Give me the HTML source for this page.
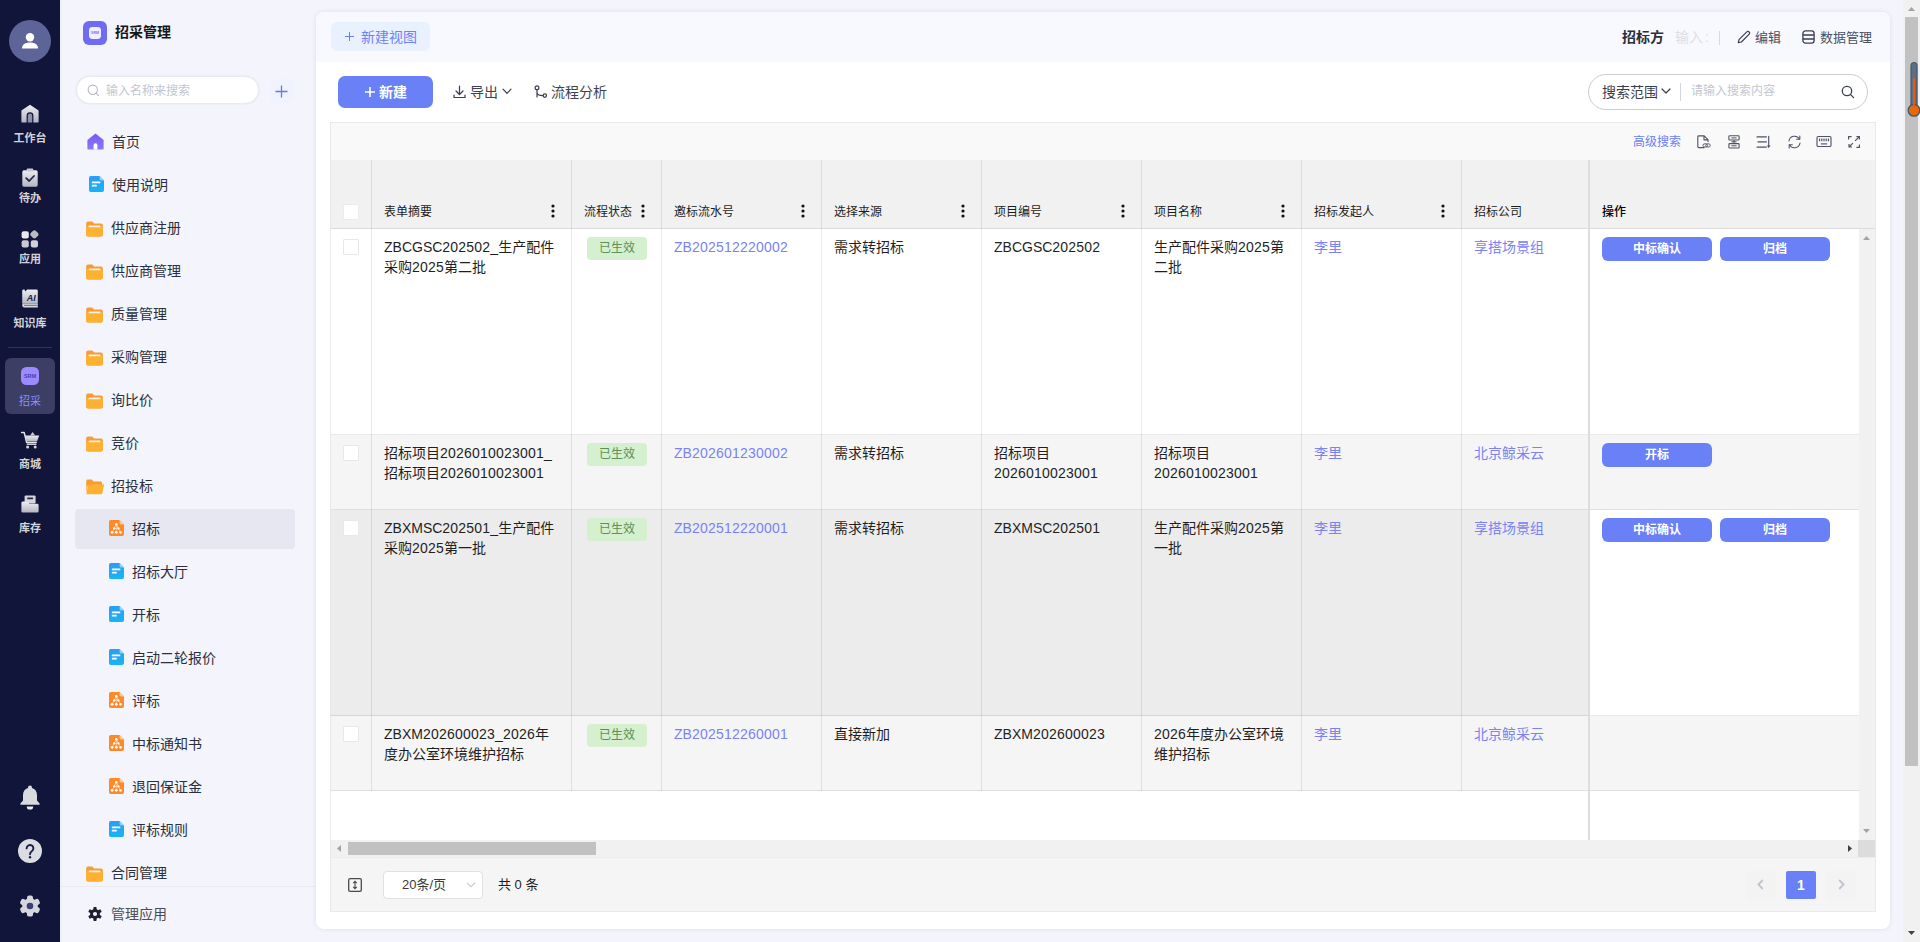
<!DOCTYPE html>
<html lang="zh-CN">
<head>
<meta charset="utf-8">
<title>招采管理</title>
<style>
*{box-sizing:border-box;margin:0;padding:0}
html,body{width:1920px;height:942px;overflow:hidden}
body{font-family:"Liberation Sans","Noto Sans CJK SC",sans-serif;font-size:14px;color:#1f2329;background:#f3f4fc;position:relative}
.abs{position:absolute}
/* ---------- left dark nav ---------- */
#nav{position:absolute;left:0;top:0;width:60px;height:942px;background:#11153a}
#nav .avatar{position:absolute;left:9px;top:20px;width:42px;height:42px;border-radius:50%;background:#5d6497}
#nav .it{position:absolute;left:0;width:60px;text-align:center;color:#dcdce2;font-size:11px;font-weight:bold;line-height:14px}
#nav .it svg{position:absolute;left:21px}
#nav .lab{position:absolute;left:0;width:60px;text-align:center;color:#d3d3da;font-size:11px;font-weight:bold;line-height:14px;letter-spacing:0}
#nav .sel{position:absolute;left:5px;top:358px;width:50px;height:56px;border-radius:6px;background:#3c3f63}
#nav .div{position:absolute;left:8px;top:347px;width:44px;height:1px;background:#303459}
/* ---------- sidebar ---------- */
#side{position:absolute;left:60px;top:0;width:256px;height:942px;background:#f3f4fc}
#side .logo{position:absolute;left:23px;top:21px;width:24px;height:24px;border-radius:6px;background:#6f6cf3}
#side .title{position:absolute;left:55px;top:22px;font-size:14px;font-weight:bold;line-height:20px;color:#14161a}
#side .search{position:absolute;left:16px;top:76px;width:183px;height:28px;border-radius:15px;background:#fff;border:1px solid #e9eaf2;box-shadow:0 0 2px rgba(90,100,160,.12)}
#side .search span{position:absolute;left:29px;top:6px;font-size:12px;line-height:16px;color:#c3c6cf}
#side .plus{position:absolute;left:210px;top:79px;width:24px;height:24px;border-radius:6px;background:#f0f2fe}
.mi{position:absolute;left:0;width:256px;height:40px;font-size:14px;line-height:20px;color:#2b2f3b}
.mi span{position:absolute;top:10px}
.mi svg{position:absolute}
.mi.sel{left:15px;width:220px;background:#e6e7f0;border-radius:4px}
/* ---------- card ---------- */
#card{position:absolute;left:316px;top:12px;width:1574px;height:917px;background:#fff;border-radius:8px;box-shadow:0 0 5px rgba(40,50,90,.10)}
#tabs{position:absolute;left:0;top:0;width:1574px;height:50px;background:#f8f9fe;border-radius:8px 8px 0 0}

/* ---------- main ---------- */
#main{position:absolute;left:0;top:0;width:1920px;height:942px;pointer-events:none}
#main *{position:absolute}
.t{white-space:nowrap}
.btnnew{left:338px;top:76px;width:95px;height:32px;border-radius:7px;background:#6980f7}
.tb{font-size:14px;line-height:20px;color:#3d4252;top:82px}
#tbl{left:330px;top:122px;width:1546px;height:790px;background:#fff;border:1px solid #e9e9eb}
.hd{top:160px;height:69px;background:#f1f1f1;border-bottom:1px solid rgba(0,0,0,.085)}
.ht{font-size:12px;line-height:16px;color:#1d1d1d;top:204px}
.vl{width:1px;background:rgba(0,0,0,.085)}
.row{left:331px;width:1258px}
.cell{font-size:14px;line-height:20px;color:#1f1f1f}
.lk{color:#7983f5}
#main .d{position:static;letter-spacing:.214px}
.tag{width:60px;height:23px;border-radius:4px;background:#d4f0cf;color:#5d8f58;font-size:12px;line-height:23px;text-align:center}
.ob{height:24px;width:110px;border-radius:6px;background:#6980f7;color:#fff;font-size:12px;font-weight:bold;line-height:24px;text-align:center}
.cb{width:16px;height:16px;background:#fff;border:1px solid #e8e8e8;border-radius:1px}
.dots{width:4px;height:14px}
</style>
</head>
<body>
<div id="nav">
<div class="avatar"><svg class="abs" style="left:12px;top:12px" width="18" height="18" viewBox="0 0 18 18"><circle cx="9" cy="5.2" r="4.2" fill="#fff"/><path d="M1 16.6c0-4 3.2-6 8-6s8 2 8 6z" fill="#fff"/></svg></div>
<svg class="abs" style="left:21px;top:104px" width="18" height="19" viewBox="0 0 18 19"><defs><linearGradient id="g1" x1="0" y1="0" x2="0" y2="1"><stop offset="0" stop-color="#ededf2"/><stop offset="1" stop-color="#b4b5c2"/></linearGradient></defs><path d="M9 .8 17.6 6.6V17.4a1.2 1.2 0 0 1-1.2 1.2H12.4V11.6a3.4 3.4 0 0 0-6.8 0v7H1.6A1.2 1.2 0 0 1 .4 17.4V6.600z" fill="url(#g1)"/><path d="M6.800 18.600V11.800a2.200 2.200 0 0 1 4.400 0v6.800z" fill="#8f91a8"/></svg>
<div class="lab" style="top:131px">工作台</div>
<svg class="abs" style="left:22px;top:168px" width="16" height="19" viewBox="0 0 16 19"><rect x=".3" y="2.300" width="15.400" height="16.400" rx="1.600" fill="url(#g1)"/><rect x="4.800" y=".4" width="6.400" height="3.200" rx=".8" fill="#c9cad4"/><path d="M4.200 10.200 7.200 13 12 8" fill="none" stroke="#23264a" stroke-width="1.800" stroke-linecap="round" stroke-linejoin="round"/></svg>
<div class="lab" style="top:191px">待办</div>
<svg class="abs" style="left:21px;top:230px" width="18" height="18" viewBox="0 0 18 18"><rect x=".6" y="1.200" width="7.200" height="7.200" rx="2" fill="#e9e9ee"/><rect x="9.900" y=".9" width="7" height="7" rx="2.200" transform="rotate(45 13.400 4.400)" fill="#b9bac6"/><rect x=".6" y="10.200" width="7.200" height="7.200" rx="2" fill="#c9cad4"/><rect x="9.800" y="10.200" width="7.200" height="7.200" rx="2" fill="#cfd0d9"/></svg>
<div class="lab" style="top:252px">应用</div>
<svg class="abs" style="left:22px;top:289px" width="16" height="19" viewBox="0 0 16 19"><path d="M2.400.6 3.600 2.400 5 .6H14.400A1.400 1.400 0 0 1 15.800 2V14.800H.2V2A1.400 1.400 0 0 1 1.600.6z" fill="url(#g1)"/><path d="M.2 16.200A1.400 1.400 0 0 1 1.600 14.800H15.800V18.400H2.400A2.200 2.200 0 0 1 .2 16.200z" fill="#d9d9e0"/><rect x="2" y="15.800" width="13.800" height="1.200" fill="#7d7f99"/><text x="9.200" y="12.200" font-size="9" font-weight="bold" font-style="italic" text-anchor="middle" fill="#1c1f45" font-family="Liberation Sans, sans-serif">AI</text></svg>
<div class="lab" style="top:316px">知识库</div>
<div class="div"></div>
<div class="sel"></div>
<svg class="abs" style="left:21px;top:367px" width="18" height="18" viewBox="0 0 18 18"><rect width="18" height="18" rx="5.500" fill="#9b8bff"/><text x="9" y="11" font-size="5.500" font-weight="bold" text-anchor="middle" fill="#4a3fb0" font-family="Liberation Sans, sans-serif">SRM</text></svg>
<div class="lab" style="top:394px;color:#8f8bff;font-weight:normal;font-size:11px">招采</div>
<svg class="abs" style="left:21px;top:431px" width="19" height="18" viewBox="0 0 19 18"><path d="M.6 1.600H3.200L5.600 11.400H15.200" fill="none" stroke="#e4e4ea" stroke-width="1.500" stroke-linecap="round" stroke-linejoin="round"/><path d="M4.200 4.400H18.200L16 10.400H5.800z" fill="url(#g1)"/><path d="M9 4.400 11.600 1 14.200 4.400z" fill="#c9cad4"/><rect x="5.600" y="12.400" width="10" height="1.600" rx=".8" fill="#c9cad4"/><circle cx="6.600" cy="16" r="1.500" fill="#d6d6de"/><circle cx="14.200" cy="16" r="1.500" fill="#d6d6de"/></svg>
<div class="lab" style="top:457px">商城</div>
<svg class="abs" style="left:21px;top:495px" width="18" height="18" viewBox="0 0 18 18"><rect x="3.600" y=".4" width="11" height="8" rx="1.200" fill="#d4d5dd"/><rect x="6.200" y="2.600" width="6" height="1.600" rx=".6" fill="#23264a"/><path d="M.4 8A1.400 1.400 0 0 1 1.800 6.600H6.600L8.400 8.800H16.200A1.400 1.400 0 0 1 17.600 10.200V16.200A1.400 1.400 0 0 1 16.200 17.600H1.800A1.400 1.400 0 0 1 .4 16.200z" fill="url(#g1)"/></svg>
<div class="lab" style="top:521px">库存</div>
<svg class="abs" style="left:19px;top:785px" width="22" height="25" viewBox="0 0 22 25"><path d="M11 .6a2 2 0 0 1 2 2v.5c3.200.9 5 3.700 5 7.100v5.200l2.600 3.200v1.200H1.400v-1.200L4 15.400V10.200c0-3.400 1.800-6.200 5-7.100v-.5a2 2 0 0 1 2-2z" fill="#d9d9e0"/><path d="M7.800 21.400h6.400a3.200 3.200 0 0 1-6.400 0z" fill="#ececf1"/></svg>
<svg class="abs" style="left:18px;top:839px" width="24" height="24" viewBox="0 0 24 24"><circle cx="12" cy="12" r="12" fill="#dcdce3"/><path d="M8.600 9.400a3.400 3.400 0 1 1 5.200 2.900c-1.200.8-1.800 1.400-1.800 2.900" fill="none" stroke="#1b1e44" stroke-width="1.900" stroke-linecap="round"/><circle cx="12" cy="18.200" r="1.200" fill="#1b1e44"/></svg>
<svg class="abs" style="left:19px;top:895px" width="22" height="22" viewBox="0 0 22 22"><g fill="#d6d6de"><circle cx="11" cy="11" r="7.800"/><g id="tt"><rect x="8" y=".4" width="6" height="6" rx="2.200"/><rect x="8" y="15.600" width="6" height="6" rx="2.200"/></g><use href="#tt" transform="rotate(60 11 11)"/><use href="#tt" transform="rotate(120 11 11)"/></g><circle cx="11" cy="11" r="3.300" fill="#3d4170"/></svg>
</div>
<div id="side">
<div class="abs" style="left:0;top:0;width:2px;height:942px;background:#eff0f5"></div><div class="logo"><svg class="abs" style="left:6px;top:6px" width="12" height="12" viewBox="0 0 12 12"><rect width="12" height="12" rx="3.400" fill="#f1eefe"/><text x="6" y="7.400" font-size="3.600" font-weight="bold" text-anchor="middle" fill="#7a74f0" font-family="Liberation Sans, sans-serif">SRM</text></svg></div>
<div class="title">招采管理</div>
<div class="search"><svg class="abs" style="left:10px;top:7px" width="13" height="13" viewBox="0 0 14 14"><circle cx="6.200" cy="6.200" r="5" fill="none" stroke="#b4b8c4" stroke-width="1.100"/><path d="M10 10 12.400 12.400" stroke="#b4b8c4" stroke-width="1.100" stroke-linecap="round"/></svg><span>输入名称来搜索</span></div>
<div class="plus"><svg class="abs" style="left:5px;top:6px" width="13" height="13" viewBox="0 0 13 13"><path d="M6.500.5v12M.5 6.500h12" stroke="#6478f2" stroke-width="1.300"/></svg></div>
<div class="mi" style="top:122px"><svg style="left:27.400px;top:10.700px" width="17" height="17" viewBox="0 0 17 17"><defs><linearGradient id="gh" x1="0" y1="0" x2="0" y2="1"><stop offset="0" stop-color="#7a5cf0"/><stop offset="1" stop-color="#8a78f8"/></linearGradient></defs><path d="M8.500.4 16.600 7V15.400A1.200 1.200 0 0 1 15.400 16.600H1.600A1.200 1.200 0 0 1 .4 15.400V7z" fill="url(#gh)"/><path d="M6.600 16.600V12.200A1.900 1.900 0 0 1 10.400 12.200V16.600z" fill="#fff"/></svg><span style="left:52px">首页</span></div>
<div class="mi" style="top:165px"><svg style="left:28.600px;top:11px" width="15" height="16" viewBox="0 0 15 16"><defs><linearGradient id="gb2" x1="0" y1="0" x2="0" y2="1"><stop offset="0" stop-color="#2d9cf4"/><stop offset="1" stop-color="#17b4f6"/></linearGradient></defs><path d="M1.800 0H10.600L15 4.400V14.200A1.800 1.800 0 0 1 13.200 16H1.800A1.800 1.800 0 0 1 0 14.200V1.800A1.800 1.800 0 0 1 1.800 0z" fill="url(#gb2)"/><path d="M10.600 0 15 4.400H12A1.400 1.400 0 0 1 10.600 3z" fill="#8fd4fb"/><rect x="2.800" y="5.600" width="8.600" height="1.700" rx=".6" fill="#fff"/><rect x="2.800" y="8.800" width="5" height="1.700" rx=".6" fill="#fff"/></svg><span style="left:52px">使用说明</span></div>
<div class="mi" style="top:208px"><svg style="left:26px;top:13px" width="17" height="16" viewBox="0 0 17 16"><path d="M.2 2.200A1.800 1.800 0 0 1 2 .4H6.200L8.200 2.400H15A1.800 1.800 0 0 1 16.800 4.200V13.800A1.800 1.800 0 0 1 15 15.600H2A1.800 1.800 0 0 1 .2 13.800z" fill="#fb9a35"/><path d="M.2 5.200H16.800V13.800A1.800 1.800 0 0 1 15 15.600H2A1.800 1.800 0 0 1 .2 13.800z" fill="#fcb131"/><rect x="2.600" y="4.400" width="11.800" height="1.900" rx=".5" fill="#fff4e2"/></svg><span style="left:51px">供应商注册</span></div>
<div class="mi" style="top:251px"><svg style="left:26px;top:13px" width="17" height="16" viewBox="0 0 17 16"><path d="M.2 2.200A1.800 1.800 0 0 1 2 .4H6.200L8.200 2.400H15A1.800 1.800 0 0 1 16.800 4.200V13.800A1.800 1.800 0 0 1 15 15.600H2A1.800 1.800 0 0 1 .2 13.800z" fill="#fb9a35"/><path d="M.2 5.200H16.800V13.800A1.800 1.800 0 0 1 15 15.600H2A1.800 1.800 0 0 1 .2 13.800z" fill="#fcb131"/><rect x="2.600" y="4.400" width="11.800" height="1.900" rx=".5" fill="#fff4e2"/></svg><span style="left:51px">供应商管理</span></div>
<div class="mi" style="top:294px"><svg style="left:26px;top:13px" width="17" height="16" viewBox="0 0 17 16"><path d="M.2 2.200A1.800 1.800 0 0 1 2 .4H6.200L8.200 2.400H15A1.800 1.800 0 0 1 16.800 4.200V13.800A1.800 1.800 0 0 1 15 15.600H2A1.800 1.800 0 0 1 .2 13.800z" fill="#fb9a35"/><path d="M.2 5.200H16.800V13.800A1.800 1.800 0 0 1 15 15.600H2A1.800 1.800 0 0 1 .2 13.800z" fill="#fcb131"/><rect x="2.600" y="4.400" width="11.800" height="1.900" rx=".5" fill="#fff4e2"/></svg><span style="left:51px">质量管理</span></div>
<div class="mi" style="top:337px"><svg style="left:26px;top:13px" width="17" height="16" viewBox="0 0 17 16"><path d="M.2 2.200A1.800 1.800 0 0 1 2 .4H6.200L8.200 2.400H15A1.800 1.800 0 0 1 16.800 4.200V13.800A1.800 1.800 0 0 1 15 15.600H2A1.800 1.800 0 0 1 .2 13.800z" fill="#fb9a35"/><path d="M.2 5.200H16.800V13.800A1.800 1.800 0 0 1 15 15.600H2A1.800 1.800 0 0 1 .2 13.800z" fill="#fcb131"/><rect x="2.600" y="4.400" width="11.800" height="1.900" rx=".5" fill="#fff4e2"/></svg><span style="left:51px">采购管理</span></div>
<div class="mi" style="top:380px"><svg style="left:26px;top:13px" width="17" height="16" viewBox="0 0 17 16"><path d="M.2 2.200A1.800 1.800 0 0 1 2 .4H6.200L8.200 2.400H15A1.800 1.800 0 0 1 16.800 4.200V13.800A1.800 1.800 0 0 1 15 15.600H2A1.800 1.800 0 0 1 .2 13.800z" fill="#fb9a35"/><path d="M.2 5.200H16.800V13.800A1.800 1.800 0 0 1 15 15.600H2A1.800 1.800 0 0 1 .2 13.800z" fill="#fcb131"/><rect x="2.600" y="4.400" width="11.800" height="1.900" rx=".5" fill="#fff4e2"/></svg><span style="left:51px">询比价</span></div>
<div class="mi" style="top:423px"><svg style="left:26px;top:13px" width="17" height="16" viewBox="0 0 17 16"><path d="M.2 2.200A1.800 1.800 0 0 1 2 .4H6.200L8.200 2.400H15A1.800 1.800 0 0 1 16.800 4.200V13.800A1.800 1.800 0 0 1 15 15.600H2A1.800 1.800 0 0 1 .2 13.800z" fill="#fb9a35"/><path d="M.2 5.200H16.800V13.800A1.800 1.800 0 0 1 15 15.600H2A1.800 1.800 0 0 1 .2 13.800z" fill="#fcb131"/><rect x="2.600" y="4.400" width="11.800" height="1.900" rx=".5" fill="#fff4e2"/></svg><span style="left:51px">竞价</span></div>
<div class="mi" style="top:466px"><svg style="left:26px;top:13px" width="18" height="16" viewBox="0 0 18 16"><path d="M.3 1.800A1.400 1.400 0 0 1 1.700.4H5.600L7.600 2.400H14.600A1.400 1.400 0 0 1 16 3.800V6H.3z" fill="#fb9a35"/><path d="M.3 5V13.600L2 5.200z" fill="#fb9a35"/><path d="M2.800 5.300H17.200A.8.800 0 0 1 18 6.300L16.300 14.200A1.300 1.300 0 0 1 15 15.200H1.400A.9.900 0 0 1 .5 14.100L2 6A1 1 0 0 1 2.800 5.300z" fill="#fcb131"/></svg><span style="left:51px">招投标</span></div>
<div class="mi sel" style="top:509px"><svg style="left:34px;top:11px" width="15" height="16" viewBox="0 0 15 16"><path d="M1.800 0H10.600L15 4.400V14.200A1.800 1.800 0 0 1 13.200 16H1.800A1.800 1.800 0 0 1 0 14.200V1.800A1.800 1.800 0 0 1 1.800 0z" fill="#fb8a2a"/><path d="M10.600 0 15 4.400H12A1.400 1.400 0 0 1 10.600 3z" fill="#fdc892"/><path d="M7.300 4.300 3.100 12.300M7.300 4.300 11.500 12.300M7.300 4.300V12.300M5.200 8.400H9.400" stroke="#ffd9b5" stroke-width=".7" fill="none"/><circle cx="7.300" cy="4.300" r="1.300" fill="#fff"/><circle cx="5.200" cy="8.400" r="1.150" fill="#fff"/><circle cx="9.400" cy="8.400" r="1.150" fill="#fff"/><circle cx="3.100" cy="12.300" r="1.350" fill="#fff"/><circle cx="7.300" cy="12.300" r="1.350" fill="#fff"/><circle cx="11.500" cy="12.300" r="1.350" fill="#fff"/></svg><span style="left:57px">招标</span></div>
<div class="mi" style="top:552px"><svg style="left:49px;top:11px" width="15" height="16" viewBox="0 0 15 16"><defs><linearGradient id="gb11" x1="0" y1="0" x2="0" y2="1"><stop offset="0" stop-color="#2d9cf4"/><stop offset="1" stop-color="#17b4f6"/></linearGradient></defs><path d="M1.800 0H10.600L15 4.400V14.200A1.800 1.800 0 0 1 13.200 16H1.800A1.800 1.800 0 0 1 0 14.200V1.800A1.800 1.800 0 0 1 1.800 0z" fill="url(#gb11)"/><path d="M10.600 0 15 4.400H12A1.400 1.400 0 0 1 10.600 3z" fill="#8fd4fb"/><rect x="2.800" y="5.600" width="8.600" height="1.700" rx=".6" fill="#fff"/><rect x="2.800" y="8.800" width="5" height="1.700" rx=".6" fill="#fff"/></svg><span style="left:72px">招标大厅</span></div>
<div class="mi" style="top:595px"><svg style="left:49px;top:11px" width="15" height="16" viewBox="0 0 15 16"><defs><linearGradient id="gb12" x1="0" y1="0" x2="0" y2="1"><stop offset="0" stop-color="#2d9cf4"/><stop offset="1" stop-color="#17b4f6"/></linearGradient></defs><path d="M1.800 0H10.600L15 4.400V14.200A1.800 1.800 0 0 1 13.200 16H1.800A1.800 1.800 0 0 1 0 14.200V1.800A1.800 1.800 0 0 1 1.800 0z" fill="url(#gb12)"/><path d="M10.600 0 15 4.400H12A1.400 1.400 0 0 1 10.600 3z" fill="#8fd4fb"/><rect x="2.800" y="5.600" width="8.600" height="1.700" rx=".6" fill="#fff"/><rect x="2.800" y="8.800" width="5" height="1.700" rx=".6" fill="#fff"/></svg><span style="left:72px">开标</span></div>
<div class="mi" style="top:638px"><svg style="left:49px;top:11px" width="15" height="16" viewBox="0 0 15 16"><defs><linearGradient id="gb13" x1="0" y1="0" x2="0" y2="1"><stop offset="0" stop-color="#2d9cf4"/><stop offset="1" stop-color="#17b4f6"/></linearGradient></defs><path d="M1.800 0H10.600L15 4.400V14.200A1.800 1.800 0 0 1 13.200 16H1.800A1.800 1.800 0 0 1 0 14.200V1.800A1.800 1.800 0 0 1 1.800 0z" fill="url(#gb13)"/><path d="M10.600 0 15 4.400H12A1.400 1.400 0 0 1 10.600 3z" fill="#8fd4fb"/><rect x="2.800" y="5.600" width="8.600" height="1.700" rx=".6" fill="#fff"/><rect x="2.800" y="8.800" width="5" height="1.700" rx=".6" fill="#fff"/></svg><span style="left:72px">启动二轮报价</span></div>
<div class="mi" style="top:681px"><svg style="left:49px;top:11px" width="15" height="16" viewBox="0 0 15 16"><path d="M1.800 0H10.600L15 4.400V14.200A1.800 1.800 0 0 1 13.200 16H1.800A1.800 1.800 0 0 1 0 14.200V1.800A1.800 1.800 0 0 1 1.800 0z" fill="#fb8a2a"/><path d="M10.600 0 15 4.400H12A1.400 1.400 0 0 1 10.600 3z" fill="#fdc892"/><path d="M7.300 4.300 3.100 12.300M7.300 4.300 11.500 12.300M7.300 4.300V12.300M5.200 8.400H9.400" stroke="#ffd9b5" stroke-width=".7" fill="none"/><circle cx="7.300" cy="4.300" r="1.300" fill="#fff"/><circle cx="5.200" cy="8.400" r="1.150" fill="#fff"/><circle cx="9.400" cy="8.400" r="1.150" fill="#fff"/><circle cx="3.100" cy="12.300" r="1.350" fill="#fff"/><circle cx="7.300" cy="12.300" r="1.350" fill="#fff"/><circle cx="11.500" cy="12.300" r="1.350" fill="#fff"/></svg><span style="left:72px">评标</span></div>
<div class="mi" style="top:724px"><svg style="left:49px;top:11px" width="15" height="16" viewBox="0 0 15 16"><path d="M1.800 0H10.600L15 4.400V14.200A1.800 1.800 0 0 1 13.200 16H1.800A1.800 1.800 0 0 1 0 14.200V1.800A1.800 1.800 0 0 1 1.800 0z" fill="#fb8a2a"/><path d="M10.600 0 15 4.400H12A1.400 1.400 0 0 1 10.600 3z" fill="#fdc892"/><path d="M7.300 4.300 3.100 12.300M7.300 4.300 11.500 12.300M7.300 4.300V12.300M5.200 8.400H9.400" stroke="#ffd9b5" stroke-width=".7" fill="none"/><circle cx="7.300" cy="4.300" r="1.300" fill="#fff"/><circle cx="5.200" cy="8.400" r="1.150" fill="#fff"/><circle cx="9.400" cy="8.400" r="1.150" fill="#fff"/><circle cx="3.100" cy="12.300" r="1.350" fill="#fff"/><circle cx="7.300" cy="12.300" r="1.350" fill="#fff"/><circle cx="11.500" cy="12.300" r="1.350" fill="#fff"/></svg><span style="left:72px">中标通知书</span></div>
<div class="mi" style="top:767px"><svg style="left:49px;top:11px" width="15" height="16" viewBox="0 0 15 16"><path d="M1.800 0H10.600L15 4.400V14.200A1.800 1.800 0 0 1 13.200 16H1.800A1.800 1.800 0 0 1 0 14.200V1.800A1.800 1.800 0 0 1 1.800 0z" fill="#fb8a2a"/><path d="M10.600 0 15 4.400H12A1.400 1.400 0 0 1 10.600 3z" fill="#fdc892"/><path d="M7.300 4.300 3.100 12.300M7.300 4.300 11.500 12.300M7.300 4.300V12.300M5.200 8.400H9.400" stroke="#ffd9b5" stroke-width=".7" fill="none"/><circle cx="7.300" cy="4.300" r="1.300" fill="#fff"/><circle cx="5.200" cy="8.400" r="1.150" fill="#fff"/><circle cx="9.400" cy="8.400" r="1.150" fill="#fff"/><circle cx="3.100" cy="12.300" r="1.350" fill="#fff"/><circle cx="7.300" cy="12.300" r="1.350" fill="#fff"/><circle cx="11.500" cy="12.300" r="1.350" fill="#fff"/></svg><span style="left:72px">退回保证金</span></div>
<div class="mi" style="top:810px"><svg style="left:49px;top:11px" width="15" height="16" viewBox="0 0 15 16"><defs><linearGradient id="gb17" x1="0" y1="0" x2="0" y2="1"><stop offset="0" stop-color="#2d9cf4"/><stop offset="1" stop-color="#17b4f6"/></linearGradient></defs><path d="M1.800 0H10.600L15 4.400V14.200A1.800 1.800 0 0 1 13.200 16H1.800A1.800 1.800 0 0 1 0 14.200V1.800A1.800 1.800 0 0 1 1.800 0z" fill="url(#gb17)"/><path d="M10.600 0 15 4.400H12A1.400 1.400 0 0 1 10.600 3z" fill="#8fd4fb"/><rect x="2.800" y="5.600" width="8.600" height="1.700" rx=".6" fill="#fff"/><rect x="2.800" y="8.800" width="5" height="1.700" rx=".6" fill="#fff"/></svg><span style="left:72px">评标规则</span></div>
<div class="mi" style="top:853px"><svg style="left:26px;top:13px" width="17" height="16" viewBox="0 0 17 16"><path d="M.2 2.200A1.800 1.800 0 0 1 2 .4H6.200L8.200 2.400H15A1.800 1.800 0 0 1 16.800 4.200V13.800A1.800 1.800 0 0 1 15 15.600H2A1.800 1.800 0 0 1 .2 13.800z" fill="#fb9a35"/><path d="M.2 5.200H16.800V13.800A1.800 1.800 0 0 1 15 15.600H2A1.800 1.800 0 0 1 .2 13.800z" fill="#fcb131"/><rect x="2.600" y="4.400" width="11.800" height="1.900" rx=".5" fill="#fff4e2"/></svg><span style="left:51px">合同管理</span></div>
<div class="abs" style="left:0;top:886px;width:256px;height:1px;background:#e9eaf2"></div>
<div class="mi" style="top:894px;color:#4a4d55"><svg style="left:28px;top:13px" width="14" height="14" viewBox="0 0 14 14"><g fill="#1d2030"><circle cx="7" cy="7" r="4.900"/><g id="t2"><rect x="5.400" y="0" width="3.200" height="14" rx=".8"/></g><use href="#t2" transform="rotate(60 7 7)"/><use href="#t2" transform="rotate(120 7 7)"/></g><circle cx="7" cy="7" r="2.100" fill="#f3f4fc"/></svg><span style="left:51px">管理应用</span></div>
</div>
<div id="card"><div id="tabs"></div></div>
<div id="main">
<div style="left:331px;top:22px;width:99px;height:29px;border-radius:6px;background:#e9f1ff"></div>
<svg style="left:344px;top:31px" width="11" height="11" viewBox="0 0 11 11"><path d="M5.500 1v9M1 5.500h9" stroke="#6b7ef3" stroke-width="1"/></svg>
<div class="t" style="left:361px;top:27px;font-size:14px;line-height:20px;color:#6f82f3">新建视图</div>
<div class="t" style="left:1622px;top:27px;font-size:14px;line-height:20px;font-weight:bold;color:#2b2f3b">招标方</div>
<div class="t" style="left:1675px;top:27px;font-size:14px;line-height:20px;color:#dddee4">输入<span style="position:static;margin-left:2px">:</span></div>
<div style="left:1719px;top:31px;width:1px;height:14px;background:#d9dae0"></div>
<svg style="left:1737px;top:30px" width="14" height="14" viewBox="0 0 14 14"><path d="M1.300 12.700 2 9.600 9.800 1.800a1.500 1.500 0 0 1 2.200 0l.2.200a1.500 1.500 0 0 1 0 2.200L4.400 12z" fill="none" stroke="#3a3f4e" stroke-width="1.200" stroke-linejoin="round"/></svg>
<div class="t" style="left:1755px;top:29px;font-size:13px;line-height:18px;color:#4b5060">编辑</div>
<svg style="left:1802px;top:30px" width="13" height="14" viewBox="0 0 13 14"><rect x=".9" y=".9" width="11.200" height="12.200" rx="2.600" fill="none" stroke="#3a3f4e" stroke-width="1.300"/><path d="M.9 5h11.200M.9 9h11.200" stroke="#3a3f4e" stroke-width="1.300"/></svg>
<div class="t" style="left:1820px;top:29px;font-size:13px;line-height:18px;color:#4b5060">数据管理</div>
<div class="btnnew"></div>
<svg style="left:365px;top:87px" width="10" height="10" viewBox="0 0 10 10"><path d="M5 0v10M0 5h10" stroke="#fff" stroke-width="1.600"/></svg>
<div class="t" style="left:379px;top:82px;font-size:14px;line-height:20px;font-weight:bold;color:#fff">新建</div>
<svg style="left:453px;top:85px" width="13" height="14" viewBox="0 0 13 14"><path d="M6.500 1v8M3 6l3.500 3.500L10 6M1 10v2.500h11V10" fill="none" stroke="#3a3f4e" stroke-width="1.200" stroke-linecap="round" stroke-linejoin="round"/></svg>
<div class="t tb" style="left:470px">导出</div>
<svg style="left:502px;top:88px" width="10" height="7" viewBox="0 0 10 7"><path d="M1 1.200 5 5.400 9 1.200" fill="none" stroke="#3a3f4e" stroke-width="1.200" stroke-linecap="round" stroke-linejoin="round"/></svg>
<svg style="left:534px;top:85px" width="14" height="14" viewBox="0 0 14 14"><circle cx="3" cy="2.800" r="1.900" fill="none" stroke="#3a3f4e" stroke-width="1.200"/><circle cx="10.800" cy="10.600" r="1.700" fill="none" stroke="#3a3f4e" stroke-width="1.200"/><path d="M3 4.700V12M3 7.500c0 2.600 2.400 3.100 6.100 3.100" fill="none" stroke="#3a3f4e" stroke-width="1.200" stroke-linecap="round"/></svg>
<div class="t tb" style="left:551px">流程分析</div>
<div style="left:1588px;top:74px;width:280px;height:36px;border-radius:18px;border:1px solid #cbccd3;background:#fff"></div>
<div class="t" style="left:1602px;top:82px;font-size:14px;line-height:20px;color:#3a3e4c">搜索范围</div>
<svg style="left:1661px;top:88px" width="10" height="7" viewBox="0 0 10 7"><path d="M1 1 5 5 9 1" fill="none" stroke="#3a3f4e" stroke-width="1.200" stroke-linecap="round" stroke-linejoin="round"/></svg>
<div style="left:1680px;top:83px;width:1px;height:18px;background:#d5d6dc"></div>
<div class="t" style="left:1691px;top:83px;font-size:12px;line-height:16px;color:#c3c6cf">请输入搜索内容</div>
<svg style="left:1841px;top:85px" width="14" height="14" viewBox="0 0 14 14"><circle cx="6" cy="6" r="4.700" fill="none" stroke="#3a3f4e" stroke-width="1.300"/><path d="M9.600 9.600 12.600 12.600" stroke="#3a3f4e" stroke-width="1.300" stroke-linecap="round"/></svg>
<div id="tbl"></div>
<div style="left:331px;top:123px;width:1544px;height:37px;background:#f9f9f9"></div>
<div class="t" style="left:1633px;top:134px;font-size:12px;line-height:16px;color:#6c7df5">高级搜索</div>
<svg style="left:1697px;top:135px" width="14" height="14" viewBox="0 0 14 14"><path d="M7.400 12.600H1.700A.9.900 0 0 1 .8 11.700V1.800A.9.900 0 0 1 1.700.9H7.200L11 4.700V7M7 1V4.900H10.800" fill="none" stroke="#4e5365" stroke-width="1.100" stroke-linejoin="round"/><ellipse cx="8.200" cy="10.400" rx="2.300" ry="1.700" fill="none" stroke="#4e5365" stroke-width=".9"/><ellipse cx="11" cy="10.400" rx="2.300" ry="1.700" fill="none" stroke="#4e5365" stroke-width=".9"/></svg>
<svg style="left:1727.500px;top:135px" width="12" height="14" viewBox="0 0 12 14"><rect x=".9" y=".8" width="10.200" height="4.200" rx=".7" fill="none" stroke="#4e5365" stroke-width="1.100"/><rect x=".9" y="8.600" width="10.200" height="4.400" rx=".7" fill="none" stroke="#4e5365" stroke-width="1.100"/><path d="M3.400 2.900h5.200M3.400 10.800h5.200" stroke="#4e5365" stroke-width="1"/><path d="M6 5V8.600M3.400 6.800H8.600" fill="none" stroke="#4e5365" stroke-width="1"/></svg>
<svg style="left:1756px;top:135px" width="16" height="14" viewBox="0 0 16 14"><path d="M1 1.900H10.400M2 6.900H10.400M1 12.100H10.400M12.700 1.200V11.600" fill="none" stroke="#4e5365" stroke-width="1.150" stroke-linecap="round"/><path d="M10.900 10.400H14.500L12.700 13z" fill="#4e5365"/></svg>
<svg style="left:1786.500px;top:134.500px" width="15" height="14" viewBox="0 0 15 15"><path d="M1.600 6.400A6 6 0 0 1 12.700 4.300M13.400 8.600A6 6 0 0 1 2.300 10.700" fill="none" stroke="#4e5365" stroke-width="1.150" stroke-linecap="round"/><path d="M13.200 1.200V4.600H9.800M1.800 13.800V10.400H5.200" fill="none" stroke="#4e5365" stroke-width="1.150" stroke-linecap="round" stroke-linejoin="round"/></svg>
<svg style="left:1816px;top:135px" width="16" height="13" viewBox="0 0 16 13"><rect x="1" y="1.500" width="14" height="10" rx="1.300" fill="none" stroke="#4e5365" stroke-width="1.150"/><path d="M3.600 3.600v2.600M5.800 3.600v2.600M8 3.600v2.600M10.200 3.600v2.600M12.400 3.600v2.600" stroke="#4e5365" stroke-width="1.150"/><path d="M4.800 8.900h6.400" stroke="#4e5365" stroke-width="1.150"/></svg>
<svg style="left:1848px;top:136px" width="12" height="12" viewBox="0 0 12 12"><path d="M.6 3.600V.6H3.600M8.400.6H11.400V3.600M11.400 8.400V11.400H8.400" fill="none" stroke="#4e5365" stroke-width="1.150"/><path d="M7.100 4.900 11 1M4.900 7.100 1 11M1 8V11H4" fill="none" stroke="#4e5365" stroke-width="1.150"/></svg>
<div class="hd" style="left:331px;width:1544px"></div>
<div class="t ht" style="left:384px">表单摘要</div>
<svg class="dots" style="left:551px;top:203.700px" width="4" height="14" viewBox="0 0 4 14"><circle cx="2" cy="2" r="1.600" fill="#111"/><circle cx="2" cy="7" r="1.600" fill="#111"/><circle cx="2" cy="12" r="1.600" fill="#111"/></svg>
<div class="t ht" style="left:584px">流程状态</div>
<svg class="dots" style="left:641px;top:203.700px" width="4" height="14" viewBox="0 0 4 14"><circle cx="2" cy="2" r="1.600" fill="#111"/><circle cx="2" cy="7" r="1.600" fill="#111"/><circle cx="2" cy="12" r="1.600" fill="#111"/></svg>
<div class="t ht" style="left:674px">邀标流水号</div>
<svg class="dots" style="left:801px;top:203.700px" width="4" height="14" viewBox="0 0 4 14"><circle cx="2" cy="2" r="1.600" fill="#111"/><circle cx="2" cy="7" r="1.600" fill="#111"/><circle cx="2" cy="12" r="1.600" fill="#111"/></svg>
<div class="t ht" style="left:834px">选择来源</div>
<svg class="dots" style="left:961px;top:203.700px" width="4" height="14" viewBox="0 0 4 14"><circle cx="2" cy="2" r="1.600" fill="#111"/><circle cx="2" cy="7" r="1.600" fill="#111"/><circle cx="2" cy="12" r="1.600" fill="#111"/></svg>
<div class="t ht" style="left:994px">项目编号</div>
<svg class="dots" style="left:1121px;top:203.700px" width="4" height="14" viewBox="0 0 4 14"><circle cx="2" cy="2" r="1.600" fill="#111"/><circle cx="2" cy="7" r="1.600" fill="#111"/><circle cx="2" cy="12" r="1.600" fill="#111"/></svg>
<div class="t ht" style="left:1154px">项目名称</div>
<svg class="dots" style="left:1281px;top:203.700px" width="4" height="14" viewBox="0 0 4 14"><circle cx="2" cy="2" r="1.600" fill="#111"/><circle cx="2" cy="7" r="1.600" fill="#111"/><circle cx="2" cy="12" r="1.600" fill="#111"/></svg>
<div class="t ht" style="left:1314px">招标发起人</div>
<svg class="dots" style="left:1441px;top:203.700px" width="4" height="14" viewBox="0 0 4 14"><circle cx="2" cy="2" r="1.600" fill="#111"/><circle cx="2" cy="7" r="1.600" fill="#111"/><circle cx="2" cy="12" r="1.600" fill="#111"/></svg>
<div class="t ht" style="left:1474px">招标公司</div>
<div class="cb" style="left:343px;top:204px;border-color:#ececec"></div>
<div class="t ht" style="left:1602px;color:#000;font-weight:500">操作</div>
<div style="left:331px;top:229px;width:1258px;height:206px;background:#ffffff;border-bottom:1px solid rgba(0,0,0,.085)"></div>
<div style="left:1589px;top:229px;width:270px;height:206px;background:#ffffff;border-bottom:1px solid rgba(0,0,0,.085)"></div>
<div class="cb" style="left:343px;top:239px"></div>
<div class="cell" style="left:384px;top:237px;width:185px">ZBCGSC<span class="d">202502_</span>生产配件<br>采购<span class="d">2025</span>第二批</div>
<div class="tag" style="left:587px;top:237px">已生效</div>
<div class="cell lk t" style="left:674px;top:237px">ZB<span class="d">202512220002</span></div>
<div class="cell t" style="left:834px;top:237px">需求转招标</div>
<div class="cell" style="left:994px;top:237px;width:145px">ZBCGSC<span class="d">202502</span></div>
<div class="cell" style="left:1154px;top:237px;width:145px">生产配件采购<span class="d">2025</span>第<br>二批</div>
<div class="cell lk t" style="left:1314px;top:237px">李里</div>
<div class="cell lk t" style="left:1474px;top:237px">享搭场景组</div>
<div class="ob" style="left:1602px;top:237px">中标确认</div>
<div class="ob" style="left:1720px;top:237px">归档</div>
<div style="left:331px;top:435px;width:1258px;height:75px;background:#f5f5f5;border-bottom:1px solid rgba(0,0,0,.085)"></div>
<div style="left:1589px;top:435px;width:270px;height:75px;background:#f5f5f5;border-bottom:1px solid rgba(0,0,0,.085)"></div>
<div class="cb" style="left:343px;top:445px"></div>
<div class="cell" style="left:384px;top:443px;width:185px">招标项目<span class="d">2026010023001_</span><br>招标项目<span class="d">2026010023001</span></div>
<div class="tag" style="left:587px;top:443px">已生效</div>
<div class="cell lk t" style="left:674px;top:443px">ZB<span class="d">202601230002</span></div>
<div class="cell t" style="left:834px;top:443px">需求转招标</div>
<div class="cell" style="left:994px;top:443px;width:145px">招标项目<br><span class="d">2026010023001</span></div>
<div class="cell" style="left:1154px;top:443px;width:145px">招标项目<br><span class="d">2026010023001</span></div>
<div class="cell lk t" style="left:1314px;top:443px">李里</div>
<div class="cell lk t" style="left:1474px;top:443px">北京鲸采云</div>
<div class="ob" style="left:1602px;top:443px">开标</div>
<div style="left:331px;top:510px;width:1258px;height:206px;background:#ececec;border-bottom:1px solid rgba(0,0,0,.085)"></div>
<div style="left:1589px;top:510px;width:270px;height:206px;background:#ffffff;border-bottom:1px solid rgba(0,0,0,.085)"></div>
<div class="cb" style="left:343px;top:520px"></div>
<div class="cell" style="left:384px;top:518px;width:185px">ZBXMSC<span class="d">202501_</span>生产配件<br>采购<span class="d">2025</span>第一批</div>
<div class="tag" style="left:587px;top:518px">已生效</div>
<div class="cell lk t" style="left:674px;top:518px">ZB<span class="d">202512220001</span></div>
<div class="cell t" style="left:834px;top:518px">需求转招标</div>
<div class="cell" style="left:994px;top:518px;width:145px">ZBXMSC<span class="d">202501</span></div>
<div class="cell" style="left:1154px;top:518px;width:145px">生产配件采购<span class="d">2025</span>第<br>一批</div>
<div class="cell lk t" style="left:1314px;top:518px">李里</div>
<div class="cell lk t" style="left:1474px;top:518px">享搭场景组</div>
<div class="ob" style="left:1602px;top:518px">中标确认</div>
<div class="ob" style="left:1720px;top:518px">归档</div>
<div style="left:331px;top:716px;width:1258px;height:75px;background:#f5f5f5;border-bottom:1px solid rgba(0,0,0,.085)"></div>
<div style="left:1589px;top:716px;width:270px;height:75px;background:#f5f5f5;border-bottom:1px solid rgba(0,0,0,.085)"></div>
<div class="cb" style="left:343px;top:726px"></div>
<div class="cell" style="left:384px;top:724px;width:185px">ZBXM<span class="d">202600023_2026</span>年<br>度办公室环境维护招标</div>
<div class="tag" style="left:587px;top:724px">已生效</div>
<div class="cell lk t" style="left:674px;top:724px">ZB<span class="d">202512260001</span></div>
<div class="cell t" style="left:834px;top:724px">直接新加</div>
<div class="cell" style="left:994px;top:724px;width:145px">ZBXM<span class="d">202600023</span></div>
<div class="cell" style="left:1154px;top:724px;width:145px"><span class="d">2026</span>年度办公室环境<br>维护招标</div>
<div class="cell lk t" style="left:1314px;top:724px">李里</div>
<div class="cell lk t" style="left:1474px;top:724px">北京鲸采云</div>
<div class="vl" style="left:371px;top:160px;height:631px"></div>
<div class="vl" style="left:571px;top:160px;height:631px"></div>
<div class="vl" style="left:661px;top:160px;height:631px"></div>
<div class="vl" style="left:821px;top:160px;height:631px"></div>
<div class="vl" style="left:981px;top:160px;height:631px"></div>
<div class="vl" style="left:1141px;top:160px;height:631px"></div>
<div class="vl" style="left:1301px;top:160px;height:631px"></div>
<div class="vl" style="left:1461px;top:160px;height:631px"></div>
<div style="left:1588px;top:160px;width:2px;height:680px;background:#dcdde3"></div>
<div style="left:1859px;top:229px;width:16px;height:611px;background:#f1f1f1"></div>
<svg style="left:1863px;top:236px" width="7" height="4" viewBox="0 0 7 4"><path d="M0 4 3.500 0 7 4z" fill="#a3a3a3"/></svg>
<svg style="left:1863px;top:829px" width="7" height="4" viewBox="0 0 7 4"><path d="M0 0 3.500 4 7 0z" fill="#a3a3a3"/></svg>
<div style="left:331px;top:840px;width:1528px;height:17px;background:#f1f1f1"></div>
<div style="left:1858px;top:840px;width:17px;height:17px;background:#dcdcdc"></div>
<div style="left:348px;top:842px;width:248px;height:13px;background:#c1c1c1"></div>
<svg style="left:337px;top:845px" width="4" height="7" viewBox="0 0 4 7"><path d="M4 0 0 3.500 4 7z" fill="#a3a3a3"/></svg>
<svg style="left:1848px;top:845px" width="4" height="7" viewBox="0 0 4 7"><path d="M0 0 4 3.500 0 7z" fill="#404040"/></svg>
<div style="left:331px;top:857px;width:1544px;height:54px;background:#f5f5f5;border-top:1px solid #ececec"></div>
<svg style="left:348px;top:878px" width="14" height="14" viewBox="0 0 14 14"><rect x=".7" y=".7" width="12.600" height="12.600" rx="1.400" fill="none" stroke="#4a4a4a" stroke-width="1.300"/><path d="M7 3.400V10.600M5.200 5.200 7 3.300 8.800 5.200M5.200 8.800 7 10.700 8.800 8.800" fill="none" stroke="#4a4a4a" stroke-width="1.100"/></svg>
<div style="left:383px;top:871px;width:100px;height:28px;border:1px solid #e1e1e1;border-radius:4px;background:#fff"></div>
<div class="t" style="left:402px;top:876px;font-size:13px;line-height:18px;color:#3a3a3a">20条/页</div>
<svg style="left:466px;top:882px" width="10" height="6" viewBox="0 0 10 6"><path d="M1 .8 5 4.800 9 .8" fill="none" stroke="#c4c4c4" stroke-width="1.100"/></svg>
<div class="t" style="left:498px;top:876px;font-size:13px;line-height:18px;color:#1f1f1f">共 0 条</div>
<div style="left:1746px;top:871px;width:30px;height:28px;background:#f3f3f4;border-radius:2px"></div>
<div style="left:1826px;top:871px;width:30px;height:28px;background:#f3f3f4;border-radius:2px"></div>
<svg style="left:1757px;top:879px" width="7" height="11" viewBox="0 0 7 11"><path d="M5.800 1 1.400 5.500 5.800 10" fill="none" stroke="#c0c4cc" stroke-width="1.800"/></svg>
<svg style="left:1838px;top:879px" width="7" height="11" viewBox="0 0 7 11"><path d="M1.200 1 5.600 5.500 1.200 10" fill="none" stroke="#c0c4cc" stroke-width="1.800"/></svg>
<div style="left:1786px;top:871px;width:30px;height:28px;background:#6980f7;border-radius:2px;color:#fff;font-weight:bold;font-size:14px;line-height:28px;text-align:center">1</div>
<div style="left:1903px;top:0;width:17px;height:942px;background:#f1f1f1"></div>
<div style="left:1905px;top:17px;width:13px;height:749px;background:#c1c1c1"></div>
<svg style="left:1908px;top:7px" width="7" height="4" viewBox="0 0 7 4"><path d="M0 4 3.500 0 7 4z" fill="#a3a3a3"/></svg>
<svg style="left:1908px;top:931px" width="7" height="4" viewBox="0 0 7 4"><path d="M0 0 3.500 4 7 0z" fill="#404040"/></svg>
<svg style="left:1906px;top:60px" width="14" height="60" viewBox="0 0 14 60"><rect x="5" y="2.500" width="6" height="46" rx="3" fill="#5f6f80" stroke="#3f5a73" stroke-width="1.200"/><circle cx="8" cy="50.300" r="5.800" fill="#e8690b" stroke="#3f5a73" stroke-width="1.400"/><rect x="7" y="18" width="2" height="30" rx="1" fill="#e8590b"/></svg>
</div>

</body>
</html>
